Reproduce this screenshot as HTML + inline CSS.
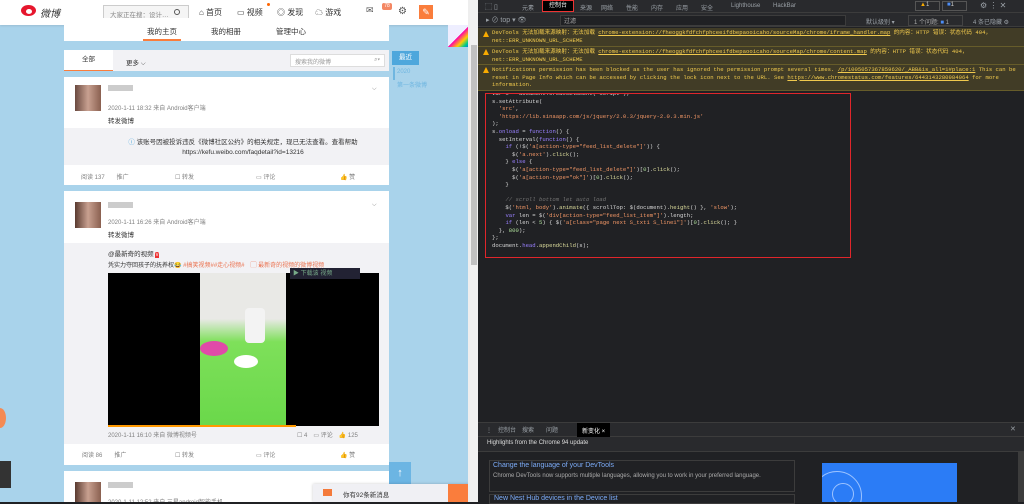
<!DOCTYPE html>
<html><head><meta charset="utf-8"><style>
*{margin:0;padding:0;box-sizing:border-box}
body{width:1024px;height:502px;overflow:hidden;position:relative;font-family:"Liberation Sans","Noto Sans CJK SC",sans-serif;font-size:7px;background:#202124}
.a{position:absolute}
.l{left:0;top:0;width:470px;height:502px;background:#a9d3eb;overflow:hidden}
.card{background:#fff;left:64px;width:325px}
.g{color:#808080}
.dt{color:#9aa0a6}
.code{font-family:"Liberation Mono",monospace;font-size:5.6px;line-height:7.6px;color:#d5d5d5;white-space:pre}
.kw{color:#9980ff}.st{color:#f29766}.fn{color:#dbdb9b}.cm{color:#747474;font-style:italic}.nu{color:#aedf9b}
.warn{font-family:"Liberation Mono","Noto Sans CJK SC",monospace;font-size:5.6px;line-height:7.6px;color:#f0c94d;left:492px;width:530px}
.tri{width:0;height:0;border-left:3.5px solid transparent;border-right:3.5px solid transparent;border-bottom:6px solid #f9ab00}
</style></head><body>
<div class="a l">
 <div class="a" style="left:0;top:0;width:470px;height:25px;background:#fff;box-shadow:0 1px 2px rgba(0,0,0,.1)"></div>
 <div class="a" style="left:21px;top:5px;width:15px;height:11px;border-radius:50%;background:#e6162d"></div>
 <div class="a" style="left:26px;top:9px;width:6px;height:5px;border-radius:50%;background:#fff"></div>
 <div class="a" style="left:40px;top:5px;font-size:10px;color:#333;font-style:italic">微博</div>
 <div class="a" style="left:103px;top:5px;width:86px;height:15px;border:1px solid #ccc;background:#f5f5f5;font-size:6.5px;color:#888;padding:3px 0 0 6px">大家正在搜：设计…</div>
 <div class="a" style="left:174px;top:9px;width:6px;height:6px;border:1px solid #555;border-radius:50%"></div>
 <div class="a" style="left:199px;top:7px;font-size:8px;color:#333">⌂ 首页</div>
 <div class="a" style="left:237px;top:7px;font-size:8px;color:#333">▭ 视频</div>
 <div class="a" style="left:267px;top:3px;width:3px;height:3px;border-radius:50%;background:#f60"></div>
 <div class="a" style="left:277px;top:7px;font-size:8px;color:#333">◎ 发现</div>
 <div class="a" style="left:315px;top:7px;font-size:8px;color:#333">☁ 游戏</div>
 <div class="a" style="left:366px;top:5px;font-size:9px;color:#555">✉</div>
 <div class="a" style="left:382px;top:3px;width:10px;height:7px;background:#f48763;color:#fff;font-size:5px;text-align:center;border-radius:2px">78</div>
 <div class="a" style="left:398px;top:6px;font-size:10px;color:#555">⚙</div>
 <div class="a" style="left:419px;top:5px;width:14px;height:14px;background:#fa7d3c;color:#fff;font-size:9px;text-align:center;line-height:14px">✎</div>
 <div class="a" style="left:448px;top:25px;width:22px;height:22px;background:linear-gradient(135deg,#eef 50%,#f0a 50%,#fc0 70%,#0c8 85%,#06f)"></div>
 <div class="a card" style="top:18px;height:23px"></div>
 <div class="a" style="left:147px;top:26px;font-size:7.5px;color:#333">我的主页</div>
 <div class="a" style="left:143px;top:39px;width:38px;height:2px;background:#fa7d3c"></div>
 <div class="a" style="left:211px;top:26px;font-size:7.5px;color:#333">我的相册</div>
 <div class="a" style="left:276px;top:26px;font-size:7.5px;color:#333">管理中心</div>
 <div class="a" style="left:64px;top:50px;width:325px;height:21px;background:#f2f2f5"></div>
 <div class="a" style="left:64px;top:50px;width:49px;height:21px;background:#fff;border-bottom:1px solid #fa7d3c;text-align:center;line-height:20px;font-size:6.5px;color:#333">全部</div>
 <div class="a" style="left:126px;top:57px;font-size:6.5px;color:#333">更多 ⌵</div>
 <div class="a" style="left:290px;top:54px;width:95px;height:13px;background:#fff;border:1px solid #ddd;font-size:6px;color:#999;padding:2px 4px">搜索我的微博 <span style="float:right">⌕▾</span></div>
 <div class="a" style="left:392px;top:51px;width:27px;height:14px;background:#4ea7dc;color:#fff;font-size:6.5px;text-align:center;line-height:14px">最近</div>
 <div class="a" style="left:393px;top:67px;width:2px;height:13px;background:#6fb6e0"></div>
 <div class="a" style="left:397px;top:69px;font-size:6px;color:#6fb6e0">2020</div>
 <div class="a" style="left:397px;top:80px;font-size:6px;color:#6fb6e0">第一条微博</div>
 <div class="a card" style="top:77px;height:108px"></div>
 <div class="a" style="left:75px;top:85px;width:26px;height:26px;background:linear-gradient(90deg,#6a4a40,#c8a090,#8a6050)"></div>
 <div class="a" style="left:108px;top:85px;width:25px;height:6px;background:#ccc"></div>
 <div class="a g" style="left:108px;top:103px;font-size:6px">2020-1-11 18:32 来自 Android客户端</div>
 <div class="a" style="left:108px;top:115px;font-size:6.5px;color:#333">转发微博</div>
 <div class="a" style="left:372px;top:86px;font-size:6px;color:#888">⌵</div>
 <div class="a" style="left:64px;top:128px;width:325px;height:37px;background:#f2f2f5"></div>
 <div class="a" style="left:120px;top:138px;width:246px;font-size:6.5px;color:#333;text-align:center;line-height:10px"><span style="color:#4ea7dc">ⓘ</span> 该账号因被投诉违反《微博社区公约》的相关规定，现已无法查看。查看帮助 https://kefu.weibo.com/faqdetail?id=13216</div>
 <div class="a g" style="left:81px;top:172px;font-size:6px">阅读 137　　推广</div>
 <div class="a g" style="left:175px;top:172px;font-size:6px">☐ 转发</div>
 <div class="a g" style="left:256px;top:172px;font-size:6px">▭ 评论</div>
 <div class="a g" style="left:340px;top:172px;font-size:6px">👍 赞</div>
 <div class="a card" style="top:191px;height:274px"></div>
 <div class="a" style="left:75px;top:202px;width:26px;height:26px;background:linear-gradient(90deg,#5a3a30,#c8a090,#8a6050)"></div>
 <div class="a" style="left:108px;top:202px;width:25px;height:6px;background:#ccc"></div>
 <div class="a g" style="left:108px;top:217px;font-size:6px">2020-1-11 16:26 来自 Android客户端</div>
 <div class="a" style="left:108px;top:229px;font-size:6.5px;color:#333">转发微博</div>
 <div class="a" style="left:372px;top:202px;font-size:6px;color:#888">⌵</div>
 <div class="a" style="left:64px;top:243px;width:325px;height:201px;background:#f2f2f5"></div>
 <div class="a" style="left:108px;top:248px;font-size:6.5px;color:#333">@最新奇的视频 <span style="background:#e33;color:#fff;font-size:5px">V</span></div>
 <div class="a" style="left:108px;top:260px;font-size:6px;color:#333">凭实力夺回孩子的抚养权😂 <span style="color:#eb7350">#搞笑视频##走心视频#　▢ 最新奇的视频的微博视频</span></div>
 <div class="a" style="left:108px;top:273px;width:271px;height:153px;background:#000"></div>
 <div class="a" style="left:200px;top:273px;width:86px;height:153px;background:linear-gradient(#e9e9e6 0,#e9e9e6 30%,#7ee05a 45%,#6ad84a 100%)"></div>
 <div class="a" style="left:245px;top:308px;width:20px;height:35px;background:#f3f3f3;border-radius:4px"></div>
 <div class="a" style="left:200px;top:341px;width:28px;height:15px;background:#e04aa8;border-radius:50%"></div>
 <div class="a" style="left:234px;top:355px;width:24px;height:13px;background:#fff;border-radius:50%"></div>
 <div class="a" style="left:290px;top:268px;width:70px;height:11px;background:#223;color:#7a8;font-size:6px;padding-left:3px">▶ 下载该 视频</div>
 <div class="a" style="left:108px;top:425px;width:188px;height:1.5px;background:#f90"></div>
 <div class="a g" style="left:108px;top:430px;font-size:6px">2020-1-11 16:10 来自 微博视频号</div>
 <div class="a g" style="left:297px;top:430px;font-size:6px">☐ 4　▭ 评论　👍 125</div>
 <div class="a g" style="left:82px;top:450px;font-size:6px">阅读 86　　推广</div>
 <div class="a g" style="left:175px;top:450px;font-size:6px">☐ 转发</div>
 <div class="a g" style="left:256px;top:450px;font-size:6px">▭ 评论</div>
 <div class="a g" style="left:340px;top:450px;font-size:6px">👍 赞</div>
 <div class="a card" style="top:471px;height:31px"></div>
 <div class="a" style="left:75px;top:482px;width:26px;height:20px;background:linear-gradient(90deg,#5a3a30,#c8a090,#8a6050)"></div>
 <div class="a" style="left:108px;top:482px;width:25px;height:6px;background:#ccc"></div>
 <div class="a g" style="left:108px;top:497px;font-size:6px">2020-1-11 12:52 来自 三星android智能手机</div>
 <div class="a" style="left:389px;top:462px;width:22px;height:22px;background:#6cb5e3;color:#fff;text-align:center;font-size:11px;line-height:22px">↑</div>
 <div class="a" style="left:313px;top:484px;width:157px;height:18px;background:#f0f0f4;box-shadow:0 0 3px rgba(0,0,0,.2)"></div>
 <div class="a" style="left:323px;top:489px;width:9px;height:7px;background:#f47a3b"></div>
 <div class="a" style="left:343px;top:489px;font-size:6.5px;color:#333">你有92条新消息</div>
 <div class="a" style="left:448px;top:484px;width:20px;height:18px;background:#fa7d3c"></div>
 <div class="a" style="left:-6px;top:408px;width:12px;height:20px;border-radius:50%;background:#f48a54"></div>
 <div class="a" style="left:0;top:461px;width:11px;height:27px;background:#333"></div>
 <div class="a" style="left:468px;top:0;width:2px;height:502px;background:#eee"></div>
</div>
<div class="a" style="left:470px;top:0;width:8px;height:502px;background:#f1f1f1"></div>
<div class="a" style="left:471px;top:45px;width:6px;height:220px;background:#c1c1c1"></div>

<div class="a" style="left:478px;top:0;width:546px;height:13px;background:#292a2d;border-bottom:1px solid #3c3c3c"></div>
<div class="a dt" style="left:485px;top:2px;font-size:7px">⬚ ▯</div>
<div class="a dt" style="left:522px;top:3px;font-size:6px">元素</div>
<div class="a" style="left:542px;top:0;width:32px;height:12px;border:1.5px solid #e33;background:#000;color:#fff;font-size:6px;text-align:center;line-height:10px">控制台</div>
<div class="a dt" style="left:580px;top:3px;font-size:6px">来源</div>
<div class="a dt" style="left:601px;top:3px;font-size:6px">网络</div>
<div class="a dt" style="left:626px;top:3px;font-size:6px">性能</div>
<div class="a dt" style="left:651px;top:3px;font-size:6px">内存</div>
<div class="a dt" style="left:676px;top:3px;font-size:6px">应用</div>
<div class="a dt" style="left:701px;top:3px;font-size:6px">安全</div>
<div class="a dt" style="left:731px;top:3px;font-size:6px">Lighthouse</div>
<div class="a dt" style="left:773px;top:3px;font-size:6px">HackBar</div>
<div class="a" style="left:915px;top:1px;width:25px;height:10px;border:1px solid #555;color:#ccc;font-size:6px;padding-left:4px"><span style="color:#f9ab00">▲</span>1</div>
<div class="a" style="left:942px;top:1px;width:25px;height:10px;border:1px solid #555;color:#ccc;font-size:6px;padding-left:4px"><span style="color:#4c8df6">■</span>1</div>
<div class="a dt" style="left:980px;top:1px;font-size:8px">⚙ ⋮ ✕</div>
<div class="a" style="left:478px;top:13px;width:546px;height:14px;background:#292a2d;border-bottom:1px solid #3c3c3c"></div>
<div class="a dt" style="left:486px;top:15px;font-size:7px">▸ ⊘ top ▾ 👁</div>
<div class="a" style="left:560px;top:15px;width:286px;height:11px;background:#202124;border:1px solid #3c3c3c;color:#aaa;font-size:6px;padding-left:3px">过滤</div>
<div class="a dt" style="left:866px;top:17px;font-size:6px">默认级别 ▾</div>
<div class="a" style="left:908px;top:15px;width:55px;height:11px;border:1px solid #444;color:#aaa;font-size:6px;padding:1px 0 0 5px">1 个问题: <span style="color:#4c8df6">■</span> 1</div>
<div class="a dt" style="left:973px;top:17px;font-size:6px">4 条已隐藏 ⚙</div>
<div class="a" style="left:478px;top:28px;width:546px;height:62px;background:#413c26"></div>
<div class="a" style="left:478px;top:46px;width:546px;height:1px;background:#665c2a"></div>
<div class="a" style="left:478px;top:64px;width:546px;height:1px;background:#665c2a"></div>
<div class="a" style="left:478px;top:90px;width:546px;height:1px;background:#665c2a"></div>
<div class="a tri" style="left:483px;top:31px"></div>
<div class="a tri" style="left:483px;top:49px"></div>
<div class="a tri" style="left:483px;top:67px"></div>
<div class="a warn" style="top:29px">DevTools 无法加载来源映射：无法加载 <u>chrome-extension://fheoggkfdfchfphceeifdbepaooicaho/sourceMap/chrome/iframe_handler.map</u> 的内容：HTTP 错误：状态代码 404，net::ERR_UNKNOWN_URL_SCHEME</div>
<div class="a warn" style="top:48px">DevTools 无法加载来源映射：无法加载 <u>chrome-extension://fheoggkfdfchfphceeifdbepaooicaho/sourceMap/chrome/content.map</u> 的内容：HTTP 错误：状态代码 404，net::ERR_UNKNOWN_URL_SCHEME</div>
<div class="a warn" style="top:66px">Notifications permission has been blocked as the user has ignored the permission prompt several times.  <u>/p/1005057367859620/_ABB&is_all=1#place:1</u> This can be reset in Page Info which can be accessed by clicking the lock icon next to the URL. See <u>https://www.chromestatus.com/features/6443143280984064</u> for more information.</div>
<div class="a" style="left:485px;top:93px;width:366px;height:165px;border:1.5px solid #e0262b;overflow:hidden">
<div class="code" style="margin:-4px 0 0 6px">var s = document.createElement('script');
s.setAttribute(
  <span class="st">'src'</span>,
  <span class="st">'https://lib.sinaapp.com/js/jquery/2.0.3/jquery-2.0.3.min.js'</span>
);
s.<span class="kw">onload</span> = <span class="kw">function</span>() {
  setInterval(<span class="kw">function</span>() {
    <span class="kw">if</span> (!$(<span class="st">'a[action-type="feed_list_delete"]'</span>)) {
      $(<span class="st">'a.next'</span>).<span class="fn">click</span>();
    } <span class="kw">else</span> {
      $(<span class="st">'a[action-type="feed_list_delete"]'</span>)[<span class="nu">0</span>].<span class="fn">click</span>();
      $(<span class="st">'a[action-type="ok"]'</span>)[<span class="nu">0</span>].<span class="fn">click</span>();
    }

    <span class="cm">// scroll bottom let auto load</span>
    $(<span class="st">'html, body'</span>).<span class="fn">animate</span>({ scrollTop: $(document).<span class="fn">height</span>() }, <span class="st">'slow'</span>);
    <span class="kw">var</span> len = $(<span class="st">'div[action-type="feed_list_item"]'</span>).length;
    <span class="kw">if</span> (len &lt; <span class="nu">5</span>) { $(<span class="st">'a[class="page next S_txt1 S_line1"]'</span>)[<span class="nu">0</span>].<span class="fn">click</span>(); }
  }, <span class="nu">800</span>);
};
document.<span class="kw">head</span>.<span class="fn">appendChild</span>(s);</div></div>
<div class="a" style="left:478px;top:422px;width:546px;height:15px;background:#292a2d;border-top:1px solid #3c3c3c;border-bottom:1px solid #3c3c3c"></div>
<div class="a dt" style="left:486px;top:425px;font-size:6px">⋮　控制台　搜索　　问题</div>
<div class="a" style="left:577px;top:423px;width:33px;height:14px;background:#000;color:#fff;font-size:6px;padding:3px 0 0 5px">新变化 ×</div>
<div class="a dt" style="left:1010px;top:425px;font-size:7px">✕</div>
<div class="a" style="left:478px;top:437px;width:546px;height:15px;background:#292a2d;border-bottom:1px solid #3c3c3c"></div>
<div class="a" style="left:487px;top:440px;color:#ddd;font-size:6px">Highlights from the Chrome 94 update</div>
<div class="a" style="left:489px;top:460px;width:306px;height:32px;border:1px solid #3c3c3c"></div>
<div class="a" style="left:493px;top:462px;color:#7cacf8;font-size:7px">Change the language of your DevTools</div>
<div class="a" style="left:493px;top:473px;width:290px;color:#aaa;font-size:6px;line-height:7px">Chrome DevTools now supports multiple languages, allowing you to work in your preferred language.</div>
<div class="a" style="left:489px;top:494px;width:306px;height:10px;border:1px solid #3c3c3c;color:#7cacf8;font-size:7px;padding-left:4px">New Nest Hub devices in the Device list</div>
<div class="a" style="left:822px;top:463px;width:135px;height:39px;background:#2b7cf6;overflow:hidden"><div class="a" style="left:-10px;top:8px;width:50px;height:50px;border:1.5px solid #9cc3ff;border-radius:50%"></div><div class="a" style="left:10px;top:20px;width:22px;height:22px;border:1.5px solid #9cc3ff;border-radius:50%"></div></div>
<div class="a" style="left:1018px;top:452px;width:6px;height:50px;background:#3c3c3c"></div>
</body></html>
